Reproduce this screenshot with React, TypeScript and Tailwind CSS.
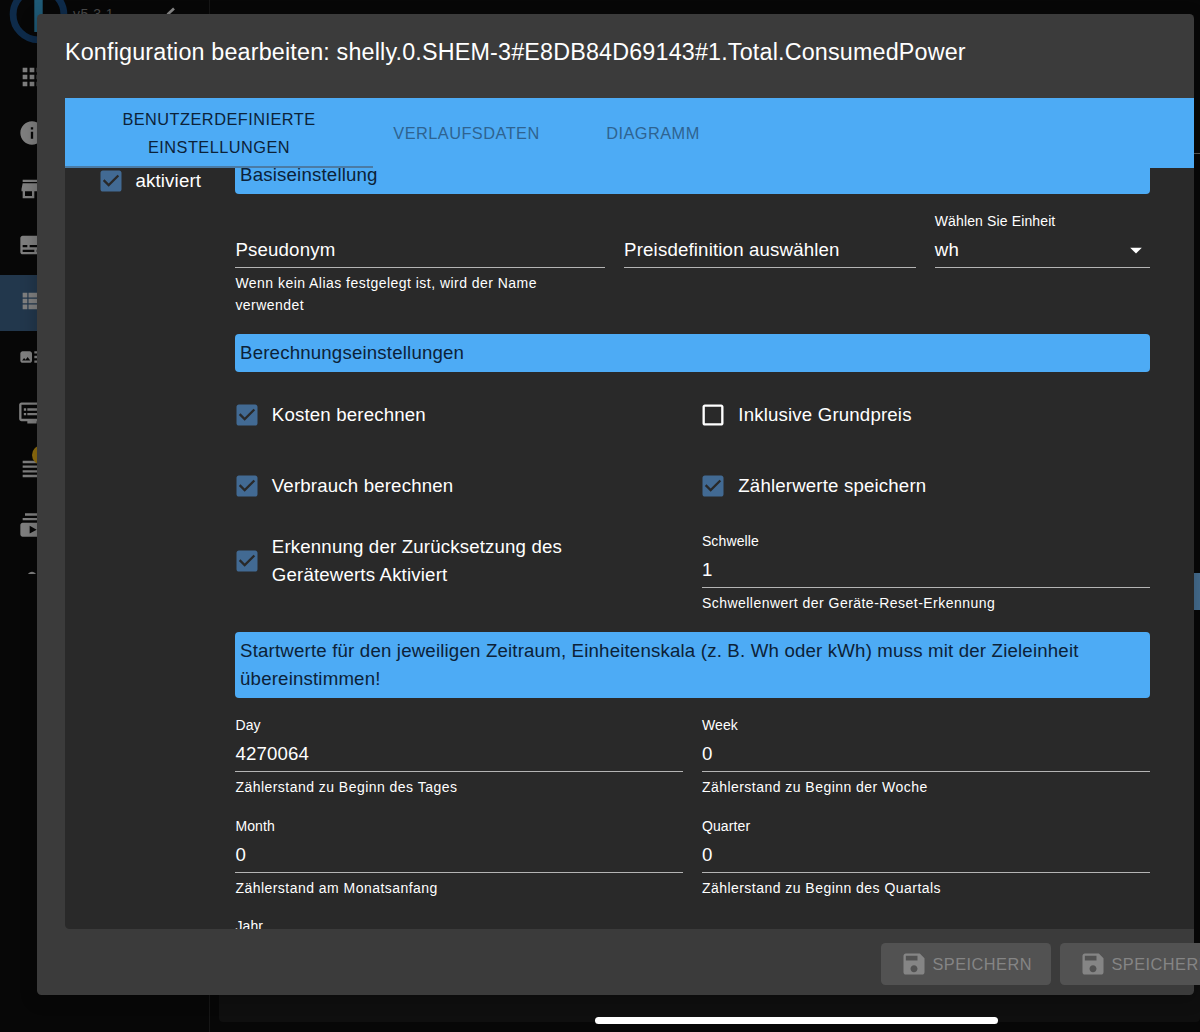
import React from "react";
import {
  MdApps,
  MdInfo,
  MdStore,
  MdSubtitles,
  MdArtTrack,
  MdDvr,
  MdViewHeadline,
  MdSubscriptions,
  MdPerson,
} from "react-icons/md";

function ViewList() {
  return (
    <svg viewBox="0 0 24 24" fill="currentColor" className="h-7 w-7">
      <path d="M4 14h4v-4H4v4zm0 5h4v-4H4v4zM4 9h4V5H4v4zm5 5h12v-4H9v4zm0 5h12v-4H9v4zM9 5v4h12V5H9z" />
    </svg>
  );
}

function SideItem({ children }: { children: React.ReactNode }) {
  return (
    <div className="flex h-14 shrink-0 items-center pl-[18.300px] text-[28px] text-[#7f7f7f]">{children}</div>
  );
}

function Background() {
  return (
    <div className="flex h-full w-full bg-[#070707]">
      <aside className="relative flex h-full w-[210px] flex-col border-r border-[#161616]">
        <div className="relative h-[49px] shrink-0 overflow-hidden">
          <svg viewBox="0 0 210 49" className="h-[49px] w-[210px]">
            <circle cx="38.5" cy="14.5" r="25.4" fill="none" stroke="#0e2b4a" strokeWidth="6.8" />
            <rect x="34.3" y="-4" width="8.4" height="36" fill="#1f5a76" />
            <path d="M167.500 14.500l6.500-6" stroke="#888" strokeWidth="2.600" />
          </svg>
          <span className="absolute left-[73px] top-[6px] text-[14px] leading-4 tracking-[0.5px] text-[#4a4a4a]">
            v5.3.1
          </span>
        </div>
        <nav className="flex h-[525px] flex-col overflow-hidden">
          <SideItem><MdApps /></SideItem>
          <SideItem><MdInfo /></SideItem>
          <SideItem><MdStore /></SideItem>
          <SideItem><MdSubtitles /></SideItem>
          <div className="-mb-[2px] mt-[2px] h-14 shrink-0 bg-[#22374c]">
            <div className="-mt-[2px]">
              <SideItem><ViewList /></SideItem>
            </div>
          </div>
          <SideItem><MdArtTrack /></SideItem>
          <SideItem><MdDvr /></SideItem>
          <div className="relative">
            <SideItem><MdViewHeadline /></SideItem>
            <span className="absolute left-[31.500px] top-[4px] h-[20px] w-[20px] rounded-full bg-[#8f6d0e]" />
          </div>
          <SideItem><MdSubscriptions /></SideItem>
          <SideItem><MdPerson /></SideItem>
        </nav>
      </aside>
      <main className="flex h-full flex-1 flex-col pl-[9px]">
        <div className="mt-[153px] h-px bg-[#5a5a5a]" />
        <div className="mt-[419px] h-[37px] bg-[#456d8f]" />
        <div className="mb-[10px] mt-auto h-[50px] rounded bg-[#0f0f0f]" />
      </main>
    </div>
  );
}

function Check({ checked = true }: { checked?: boolean }) {
  return checked ? (
    <svg viewBox="0 0 24 24" className="h-7 w-7 shrink-0 text-[#426a93]" fill="currentColor">
      <path d="M19 3H5c-1.110 0-2 .9-2 2v14c0 1.100.89 2 2 2h14c1.110 0 2-.9 2-2V5c0-1.100-.89-2-2-2zm-9 14l-5-5 1.410-1.410L10 14.170l7.590-7.590L19 8l-9 9z" />
    </svg>
  ) : (
    <svg viewBox="0 0 24 24" className="h-7 w-7 shrink-0 text-white" fill="currentColor">
      <path d="M19 5v14H5V5h14m0-2H5c-1.100 0-2 .9-2 2v14c0 1.100.9 2 2 2h14c1.100 0 2-.9 2-2V5c0-1.100-.9-2-2-2z" />
    </svg>
  );
}

function Option({ label, checked = true }: { label: React.ReactNode; checked?: boolean }) {
  return (
    <label className="-ml-[2.500px] flex items-center gap-[10.900px] text-[18.670px] leading-7 tracking-[0.165px]">
      <Check checked={checked} />
      <span>{label}</span>
    </label>
  );
}

function Header({ children, className = "" }: { children: React.ReactNode; className?: string }) {
  return (
    <div
      className={`rounded-[4px] bg-[#4dabf5] px-[4.670px] py-[4.670px] text-[18.670px] leading-7 tracking-[0.175px] text-[#0c2238] ${className}`}
    >
      {children}
    </div>
  );
}

function Field({
  label,
  value,
  help,
  className = "",
  select = false,
}: {
  label?: string;
  value: string;
  help?: string;
  className?: string;
  select?: boolean;
}) {
  return (
    <div className={className}>
      <div className="h-[19px] whitespace-nowrap text-[14px] leading-[19px] tracking-[0.13px]">{label}</div>
      <div className="flex h-[37px] items-center justify-between border-b border-[#b4b4b4] pt-[2px] text-[18.670px] leading-7 tracking-[0.160px]">
        <span className="whitespace-nowrap">{value}</span>
        {select && (
          <svg viewBox="0 0 24 24" fill="currentColor" className="h-7 w-7">
            <path d="M7 10l5 5 5-5z" />
          </svg>
        )}
      </div>
      {help && <div className="mt-[4px] text-[14px] leading-[22px] tracking-[0.465px]">{help}</div>}
    </div>
  );
}

function SaveButton({ label }: { label: string }) {
  return (
    <button className="flex h-[42px] w-[170px] shrink-0 items-center gap-[5px] rounded-[4.500px] bg-[#525252] pl-[18.500px] text-[16.330px] tracking-[0.470px] text-[#858585]">
      <svg viewBox="0 0 24 24" fill="currentColor" className="h-7 w-7 shrink-0">
        <path d="M17 3H5c-1.110 0-2 .9-2 2v14c0 1.100.89 2 2 2h14c1.100 0 2-.9 2-2V7l-4-4zm-5 16c-1.660 0-3-1.340-3-3s1.340-3 3-3 3 1.340 3 3-1.340 3-3 3zm3-10H5V5h10v4z" />
      </svg>
      <span>{label}</span>
    </button>
  );
}

function Dialog() {
  return (
    <section className="absolute left-[37px] top-[14px] flex h-[981px] w-[1157px] flex-col rounded-[4.500px] bg-[#3b3b3b] shadow-[0_4px_16px_2px_rgba(0,0,0,0.2)]">
      <h2 className="h-[84px] shrink-0 whitespace-nowrap pl-[28px] pt-[20px] text-[23.330px] leading-9 tracking-[0.170px] text-white">
        Konfiguration bearbeiten: shelly.0.SHEM-3#E8DB84D69143#1.Total.ConsumedPower
      </h2>
      <div className="ml-[28px] flex h-[831px] flex-col overflow-hidden rounded-bl-[4.500px] bg-[#292929]">
        <div className="z-10 flex h-[70px] shrink-0 bg-[#4dabf5] text-[16.330px] leading-7 tracking-[0.470px] text-[#2f6390]">
          <div className="w-[308px] border-b-2 border-[#4a7ba5] pt-[7px] text-center text-[#0c2238]">
            BENUTZERDEFINIERTE
            <br />
            EINSTELLUNGEN
          </div>
          <div className="flex w-[187px] items-center justify-center">VERLAUFSDATEN</div>
          <div className="flex w-[186px] items-center justify-center">DIAGRAMM</div>
        </div>
        <div className="flex min-h-0 flex-1 overflow-hidden pl-[34px] text-white">
          <div className="w-[136.400px] shrink-0">
            <div className="-mt-[1.500px]">
              <Option label="aktiviert" />
            </div>
          </div>
          <div className="w-[914.500px] shrink-0">
            <Header className="-mt-[11.500px]">Basiseinstellung</Header>
            <div className="mt-[18.200px] flex gap-[18.700px]">
              <Field className="w-[370px]" value="Pseudonym" help="Wenn kein Alias festgelegt ist, wird der Name verwendet" />
              <Field className="w-[292px]" value="Preisdefinition auswählen" />
              <Field className="w-[215px]" label="Wählen Sie Einheit" value="wh" select />
            </div>
            <Header className="mt-[18.400px]">Berechnungseinstellungen</Header>
            <div className="mt-[29.400px] grid grid-cols-2 gap-x-[18.500px] gap-y-[43.300px]">
              <Option label="Kosten berechnen" />
              <Option label="Inklusive Grundpreis" checked={false} />
              <Option label="Verbrauch berechnen" />
              <Option label="Zählerwerte speichern" />
            </div>
            <div className="mt-[31.200px] grid grid-cols-2 gap-x-[18.500px]">
              <div className="pt-[1px]">
                <Option
                  label={
                    <>
                      Erkennung der Zurücksetzung des
                      <br />
                      Gerätewerts Aktiviert
                    </>
                  }
                />
              </div>
              <Field label="Schwelle" value="1" help="Schwellenwert der Geräte-Reset-Erkennung" />
            </div>
            <Header className="mt-[18.900px]">
              Startwerte für den jeweiligen Zeitraum, Einheitenskala (z. B. Wh oder kWh) muss mit der Zieleinheit
              übereinstimmen!
            </Header>
            <div className="mt-[18.600px] grid grid-cols-2 gap-x-[18.500px] gap-y-[18.300px]">
              <Field label="Day" value="4270064" help="Zählerstand zu Beginn des Tages" />
              <Field label="Week" value="0" help="Zählerstand zu Beginn der Woche" />
              <Field label="Month" value="0" help="Zählerstand am Monatsanfang" />
              <Field label="Quarter" value="0" help="Zählerstand zu Beginn des Quartals" />
              <Field label="Jahr" value="" />
            </div>
          </div>
        </div>
      </div>
      <footer className="flex gap-[9px] pl-[844px] pt-[14px]">
        <SaveButton label="SPEICHERN" />
        <SaveButton label="SPEICHERN" />
      </footer>
    </section>
  );
}

export default function App() {
  return (
    <div className="relative h-[1032px] w-[1200px] overflow-hidden bg-black font-['Liberation_Sans',Arial,sans-serif]">
      <Background />
      <Dialog />
      <div className="absolute bottom-[8px] left-[595px] h-[7px] w-[403px] rounded-full bg-white" />
    </div>
  );
}
